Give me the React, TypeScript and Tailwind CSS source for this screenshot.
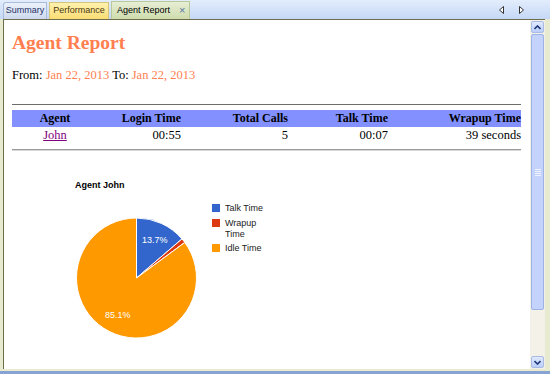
const serif = "font-['Liberation_Serif','Times_New_Roman',serif]";

function pt(cx: number, cy: number, r: number, frac: number) {
  const a = frac * Math.PI * 2;
  return [cx + r * Math.sin(a), cy - r * Math.cos(a)];
}

function slice(cx: number, cy: number, r: number, from: number, to: number) {
  const [x1, y1] = pt(cx, cy, r, from);
  const [x2, y2] = pt(cx, cy, r, to);
  const large = to - from > 0.5 ? 1 : 0;
  return `M${cx},${cy} L${x1},${y1} A${r},${r} 0 ${large} 1 ${x2},${y2} Z`;
}

function PieChart() {
  const cx = 136.5;
  const cy = 278;
  const r = 60;
  const parts = [
    { name: "Talk Time", value: 0.137, color: "#3366cc" },
    { name: "Wrapup Time", value: 0.012, color: "#dc3912" },
    { name: "Idle Time", value: 0.851, color: "#ff9900" },
  ];
  let acc = 0;
  return (
    <svg width="300" height="216" className="block">
      <g transform="translate(-12,-151)" fontFamily="'Liberation Sans', Arial, sans-serif" fontSize="9">
        <text x="75" y="188" fontWeight="bold" fill="#000">Agent John</text>
        {parts.map((p) => {
          const d = slice(cx, cy, r, acc, acc + p.value);
          acc += p.value;
          return <path key={p.name} d={d} fill={p.color} stroke="#fff" strokeWidth="1" />;
        })}
        <text x="142" y="243" fill="#fff">13.7%</text>
        <text x="105" y="318" fill="#fff">85.1%</text>
        <rect x="212" y="204" width="8" height="8" fill="#3366cc" />
        <text x="225" y="211" fill="#222">Talk Time</text>
        <rect x="212" y="219" width="8" height="8" fill="#dc3912" />
        <text x="225" y="225.5" fill="#222">Wrapup</text>
        <text x="225" y="237" fill="#222">Time</text>
        <rect x="212" y="244" width="8" height="8" fill="#ff9900" />
        <text x="225" y="251" fill="#222">Idle Time</text>
      </g>
    </svg>
  );
}

function Chevron({ up }: { up?: boolean }) {
  return (
    <svg width="7" height="5" viewBox="0 0 7 5">
      <polyline
        points={up ? "0.5,4 3.5,1 6.5,4" : "0.5,1 3.5,4 6.5,1"}
        fill="none"
        stroke="#1f3a7a"
        strokeWidth="1.6"
      />
    </svg>
  );
}

export default function App() {
  const cols = [
    { h: "Agent", v: "John", w: "w-[86px]", align: "text-center" },
    { h: "Login Time", v: "00:55", w: "w-[83px]", align: "text-right" },
    { h: "Total Calls", v: "5", w: "w-[107px]", align: "text-right" },
    { h: "Talk Time", v: "00:07", w: "w-[100px]", align: "text-right" },
    { h: "Wrapup Time", v: "39 seconds", w: "flex-1", align: "text-right" },
  ];

  return (
    <div className="w-[550px] h-[374px] flex flex-col overflow-hidden bg-[#e8ebd0] font-['Liberation_Sans',Arial,sans-serif]">
      {/* tab strip */}
      <div className="h-[19px] flex items-end bg-linear-to-b from-[#e3edfc] to-[#c4d8f6] pl-[3px] pr-[26px] text-[9px]">
        <div className="h-[17px] w-[44px] flex items-center justify-center rounded-tl-[3px] border border-b-0 border-[#a9bcdc] bg-linear-to-b from-[#edf2fb] to-[#cdd9ee] text-[#1e2f66]">
          Summary
        </div>
        <div className="ml-[2px] h-[17px] w-[60px] flex items-center justify-center border border-b-0 border-[#d6c47c] bg-linear-to-b from-[#fff2ae] to-[#fbdc72] text-[#4a3a10]">
          Performance
        </div>
        <div className="ml-[2px] h-[18px] w-[79px] flex items-center pl-[5px] gap-[9px] border border-b-0 border-[#b9c99a] bg-linear-to-b from-[#e6eed4] to-[#cfdcad] text-black">
          <span>Agent Report</span>
          <span className="text-[#5b77a6] text-[11px] leading-none">×</span>
        </div>
        <div className="flex-1" />
        <div className="h-[19px] flex items-center gap-[15px]">
          <svg width="5" height="8" viewBox="0 0 5 8">
            <polygon points="4.5,0.5 0.5,4 4.5,7.5" fill="#fff" stroke="#333" strokeWidth="1" />
          </svg>
          <svg width="5" height="8" viewBox="0 0 5 8">
            <polygon points="0.5,0.5 4.5,4 0.5,7.5" fill="#fff" stroke="#333" strokeWidth="1" />
          </svg>
        </div>
      </div>

      {/* frame */}
      <div className="flex-1 flex pl-[3px] pr-[5px] pb-[2px]">
        <div className="flex-1 flex border-l border-t border-[#6e6e4c] bg-white">
          <div className={`flex-1 pl-[8px] pr-[9px] ${serif}`}>
            <h1 className="mt-[13px] text-[19.5px] leading-[20px] font-bold text-[#ff7f50]">Agent Report</h1>
            <p className="mt-[15px] text-[12.5px] leading-[14px] text-black">
              From: <span className="text-[#ff7f50]">Jan 22, 2013</span> To:{" "}
              <span className="text-[#ff7f50]">Jan 22, 2013</span>
            </p>
            <div className="mt-[22px] border-t border-[#6c6c6c]" />
            <div className="mt-[5px] flex h-[17px] bg-[#8291ff] text-[12px] leading-[17px] font-bold text-black">
              {cols.map((c) => (
                <div key={c.h} className={`${c.w} ${c.align}`}>{c.h}</div>
              ))}
            </div>
            <div className="flex h-[17px] text-[12.5px] leading-[17px] text-black">
              {cols.map((c, i) => (
                <div key={c.h} className={`${c.w} ${c.align}`}>
                  {i === 0 ? <span className="text-[#800080] underline">{c.v}</span> : c.v}
                </div>
              ))}
            </div>
            <div className="mt-[5px] border-t border-b border-t-[#9a9a9a] border-b-[#d8d8d8]" />
            <PieChart />
          </div>

          {/* scrollbar */}
          <div className="w-[15px] flex flex-col bg-[#f4f2e8] px-[1px] pt-[1px] pb-[1px]">
            <div className="h-[12px] flex items-center justify-center rounded-[2px] border border-[#a8bbe6] bg-linear-to-b from-[#e0e9fd] to-[#bccffa]">
              <Chevron up />
            </div>
            <div className="mt-[1px] h-[276px] flex flex-col items-center justify-center rounded-[2px] border border-[#9eb3e8] bg-[#c3d3fb]">
              <div className="flex flex-col gap-[1px]">
                <div className="w-[6px] h-px bg-[#eef3ff]" />
                <div className="w-[6px] h-px bg-[#eef3ff]" />
                <div className="w-[6px] h-px bg-[#eef3ff]" />
                <div className="w-[6px] h-px bg-[#eef3ff]" />
              </div>
            </div>
            <div className="flex-1" />
            <div className="h-[12px] flex items-center justify-center rounded-[2px] border border-[#a8bbe6] bg-linear-to-b from-[#e0e9fd] to-[#bccffa]">
              <Chevron />
            </div>
          </div>
        </div>
      </div>
      <div className="h-[3px] bg-[#86a3d4]" />
    </div>
  );
}
